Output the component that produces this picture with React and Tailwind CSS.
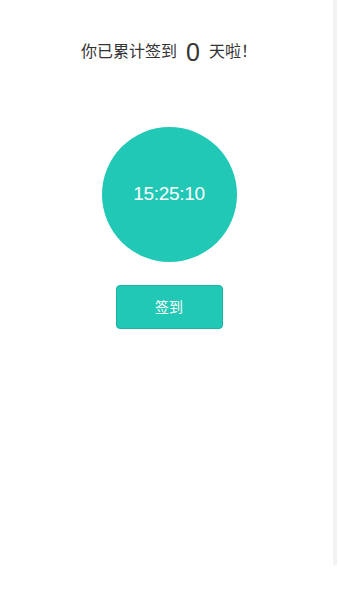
import React, { useState } from "react";

export default function App() {
  const [days] = useState(0);
  const [time] = useState("15:25:10");

  return (
    <main
      className="relative w-full h-[600px] bg-white overflow-hidden"
      style={{ fontFamily: '"Liberation Sans", "Noto Sans CJK SC", sans-serif' }}
    >
      <div className="flex flex-col items-center pt-[36px]">
        {/* 累计签到 */}
        <h1 className="h-[32px] flex items-center text-[16px] text-[#333] font-normal">
          <span>你已累计签到</span>
          <span className="text-[25px] mx-[9px] leading-none">{days}</span>
          <span>天啦！</span>
        </h1>

        <div className="mt-[59px] w-[135px] h-[135px] rounded-full bg-[#21c8b5] flex items-center justify-center">
          <span className="text-white text-[19px] tracking-[-0.3px]">{time}</span>
        </div>

        <button className="mt-[23px] w-[107px] h-[44px] rounded-[4px] bg-[#21c8b5] border border-[#1cb3a2] text-white text-[14px]">
          签到
        </button>
      </div>

      {/* scroll strip */}
      <div className="absolute top-0 right-[1px] w-[4px] h-[565px] bg-[#f3f3f3]" />
    </main>
  );
}
